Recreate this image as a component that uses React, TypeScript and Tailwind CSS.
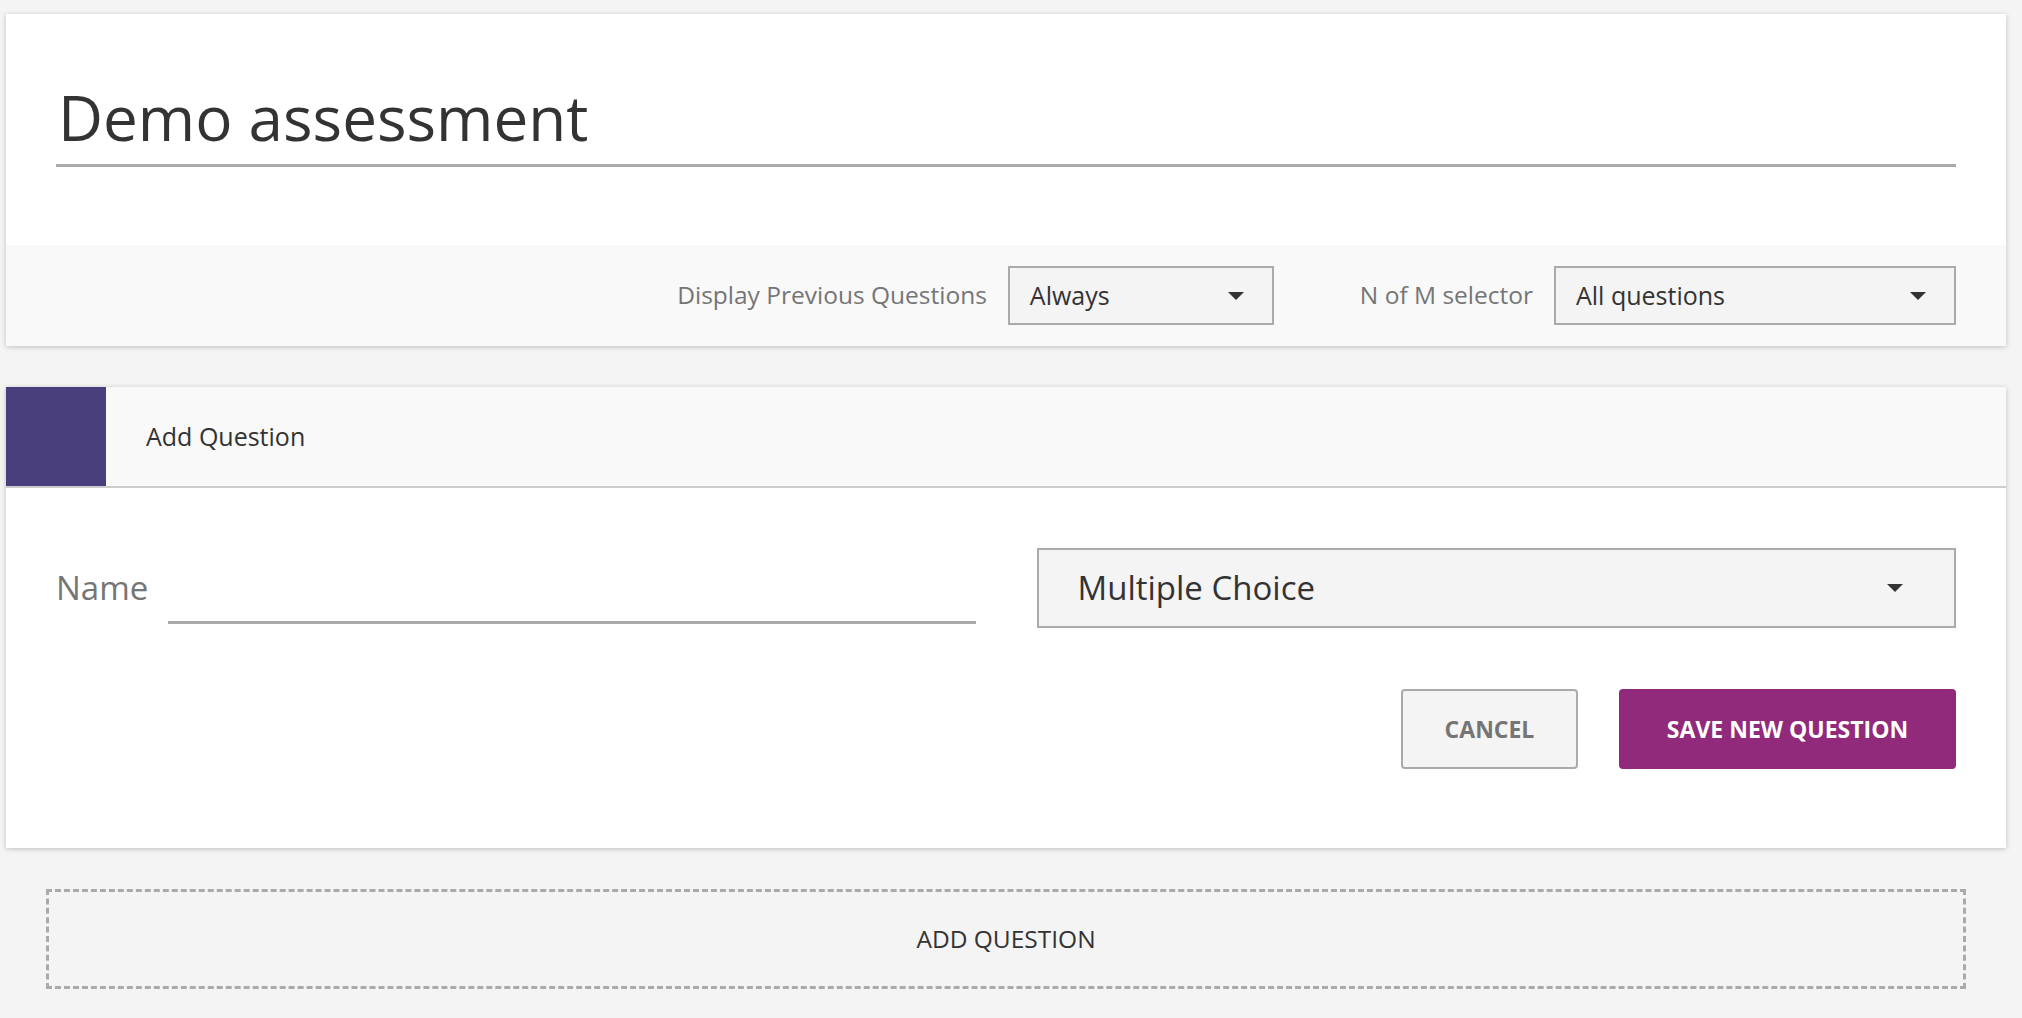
const font = { fontFamily: '"Open Sans", "Noto Sans", sans-serif' };

function Caret({ className = "" }: { className?: string }) {
  return (
    <svg className={className} width="16" height="8" viewBox="0 0 16 8">
      <path d="M0 0h16L8 8z" fill="#333" />
    </svg>
  );
}

function Select({ value, className }: { value: string; className: string }) {
  return (
    <div
      className={`flex h-[59px] items-center justify-between border-2 border-[#aaa] bg-[#f4f4f4] pl-[20px] pr-[28px] text-[25px] text-[#333] ${className}`}
    >
      <span>{value}</span>
      <Caret />
    </div>
  );
}

export default function App() {
  return (
    <div className="min-h-screen w-full bg-[#f4f4f4]" style={font}>
      <div className="w-[2012px] px-[6px] pt-[14px] pb-[28px]">
        {/* assessment card */}
        <div className="bg-white shadow-[0_1px_5px_rgba(0,0,0,0.22)]">
          <div className="px-[50px] pt-[60px] pb-[78px]">
            <div className="border-b-[3px] border-[#aaa] pl-[2px] pb-[4px] text-[62px] leading-[86px] text-[#333]">
              Demo assessment
            </div>
          </div>
          <div className="flex h-[101px] items-center justify-end bg-[#f9f9f9] pr-[50px] text-[24.5px] text-[#757575]">
            <span className="mr-[21px]">Display Previous Questions</span>
            <Select value="Always" className="w-[266px]" />
            <span className="ml-[86px] mr-[21px]">N of M selector</span>
            <Select value="All questions" className="w-[402px]" />
          </div>
        </div>

        {/* add question card */}
        <div className="mt-[41px] bg-white shadow-[0_1px_5px_rgba(0,0,0,0.22)]">
          <div className="flex h-[101px] items-stretch border-b-2 border-[#ccc] bg-[#f9f9f9]">
            <div className="w-[100px] bg-[#4a3f7d]" />
            <div className="flex items-center pl-[40px] text-[25px] text-[#333]">Add Question</div>
          </div>
          <div className="px-[50px] pt-[60px] pb-[79px]">
            <div className="grid grid-cols-2 gap-[61px]">
              <div className="flex items-end">
                <span className="mb-[11px] mr-[20px] text-[33px] leading-[58px] text-[#757575]">Name</span>
                <div className="mb-[4px] h-[3px] flex-1 bg-[#aaa]" />
              </div>
              <div className="flex h-[80px] items-center justify-between border-2 border-[#aaa] bg-[#f4f4f4] pl-[39px] pr-[51px] text-[33px] text-[#333]">
                <span>Multiple Choice</span>
                <Caret />
              </div>
            </div>
            <div className="mt-[61px] flex justify-end gap-[41px]">
              <button className="h-[80px] w-[177px] rounded-[4px] border-2 border-[#aaa] bg-[#f4f4f4] text-[23px] font-bold text-[#757575]">
                CANCEL
              </button>
              <button className="h-[80px] w-[337px] rounded-[4px] bg-[#912a7b] text-[23px] font-bold text-white">
                SAVE NEW QUESTION
              </button>
            </div>
          </div>
        </div>

        {/* add question placeholder */}
        <div className="mx-[40px] mt-[41px] flex h-[100px] items-center justify-center border-[3px] border-dashed border-[#aaa] text-[24.5px] text-[#333]">
          ADD QUESTION
        </div>
      </div>
    </div>
  );
}
